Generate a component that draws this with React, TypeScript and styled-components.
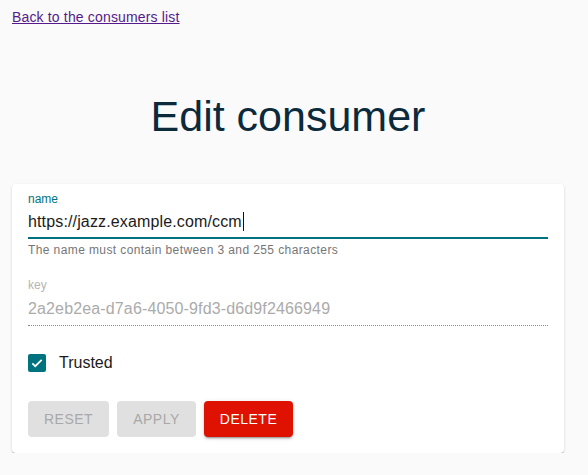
import React, { useState } from 'react';
import styled, { createGlobalStyle } from 'styled-components';

const teal = '#00737f';

const GlobalStyle = createGlobalStyle`
  html, body {
    margin: 0;
    padding: 0;
    background: #fafafa;
    font-family: "Liberation Sans", Arial, sans-serif;
  }
`;

const Page = styled.div`
  padding: 8px 24px 0 12px;
`;

const BackLink = styled.a`
  display: inline-block;
  font-size: 14px;
  line-height: 18px;
  letter-spacing: 0.16px;
  color: #551a8b;
  text-decoration: underline;
`;

const Title = styled.h1`
  margin: 64px 0 42px;
  text-align: center;
  font-size: 43px;
  line-height: 52px;
  font-weight: 400;
  color: #0b2a3c;
`;

const Card = styled.div`
  background: #fff;
  border-radius: 4px;
  padding: 7px 16px 16px;
  box-shadow: 0 2px 1px -1px rgba(0, 0, 0, 0.2), 0 1px 1px 0 rgba(0, 0, 0, 0.14),
    0 1px 3px 0 rgba(0, 0, 0, 0.12);
`;

const Field = styled.div<{ $gap?: number }>`
  display: flex;
  flex-direction: column;
  margin-top: ${(p) => p.$gap ?? 0}px;
`;

const Label = styled.label<{ $active?: boolean; $disabled?: boolean }>`
  font-size: 12px;
  line-height: 16px;
  color: ${(p) => (p.$active ? teal : p.$disabled ? '#b5b5b5' : '#757575')};
`;

const InputBox = styled.div<{ $focused?: boolean; $disabled?: boolean }>`
  font-size: 16px;
  line-height: 20px;
  letter-spacing: 0.14px;
  padding: ${(p) => (p.$focused ? '5px 0 5px' : '6px 0 6px')};
  color: ${(p) => (p.$disabled ? '#ababab' : '#1b1b1b')};
  border-bottom: ${(p) =>
    p.$focused ? `2px solid ${teal}` : p.$disabled ? '1px dotted #8a8a8a' : '1px solid #949494'};
  white-space: nowrap;
`;

const Caret = styled.span`
  display: inline-block;
  width: 1px;
  height: 19px;
  margin-left: 1px;
  background: #111;
  vertical-align: -4px;
`;

const Helper = styled.p`
  margin: 3px 0 0;
  font-size: 12px;
  line-height: 16px;
  letter-spacing: 0.4px;
  color: #767676;
`;

const CheckRow = styled.label`
  display: flex;
  align-items: center;
  gap: 13px;
  margin-top: 28px;
  height: 18px;
  font-size: 16px;
  color: #1b1b1b;
  cursor: pointer;
`;

const Box = styled.span<{ $checked: boolean }>`
  width: 18px;
  height: 18px;
  border-radius: 2px;
  display: flex;
  align-items: center;
  justify-content: center;
  box-sizing: border-box;
  background: ${(p) => (p.$checked ? teal : 'transparent')};
  border: ${(p) => (p.$checked ? 'none' : '2px solid #757575')};
`;

const Actions = styled.div`
  display: flex;
  gap: 8px;
  margin-top: 29px;
`;

const Button = styled.button<{ $danger?: boolean }>`
  height: 36px;
  padding: 0 16px;
  border: none;
  border-radius: 4px;
  font-family: inherit;
  font-size: 14px;
  letter-spacing: 0.5px;
  text-transform: uppercase;
  color: ${(p) => (p.$danger ? '#fff' : '#a8a8a8')};
  background: ${(p) => (p.$danger ? '#df1100' : '#e0e0e0')};
  box-shadow: ${(p) =>
    p.$danger
      ? '0 3px 1px -2px rgba(0,0,0,0.2), 0 2px 2px 0 rgba(0,0,0,0.14), 0 1px 5px 0 rgba(0,0,0,0.12)'
      : 'none'};
  cursor: ${(p) => (p.$danger ? 'pointer' : 'default')};
`;

export default function App() {
  const [trusted, setTrusted] = useState(true);

  return (
    <>
      <GlobalStyle />
      <Page>
        <BackLink href="#">Back to the consumers list</BackLink>
        <Title>Edit consumer</Title>
        <Card>
          <Field>
            <Label $active>name</Label>
            <InputBox $focused>
              https://jazz.example.com/ccm
              <Caret />
            </InputBox>
            <Helper>The name must contain between 3 and 255 characters</Helper>
          </Field>
          <Field $gap={19}>
            <Label $disabled>key</Label>
            <InputBox $disabled>2a2eb2ea-d7a6-4050-9fd3-d6d9f2466949</InputBox>
          </Field>
          <CheckRow onClick={() => setTrusted(!trusted)}>
            <Box $checked={trusted}>
              {trusted && (
                <svg width="14" height="14" viewBox="0 0 24 24">
                  <path d="M4 12.5l5 5L20 6.5" fill="none" stroke="#fff" strokeWidth="3" />
                </svg>
              )}
            </Box>
            Trusted
          </CheckRow>
          <Actions>
            <Button disabled>Reset</Button>
            <Button disabled>Apply</Button>
            <Button $danger>Delete</Button>
          </Actions>
        </Card>
      </Page>
    </>
  );
}
